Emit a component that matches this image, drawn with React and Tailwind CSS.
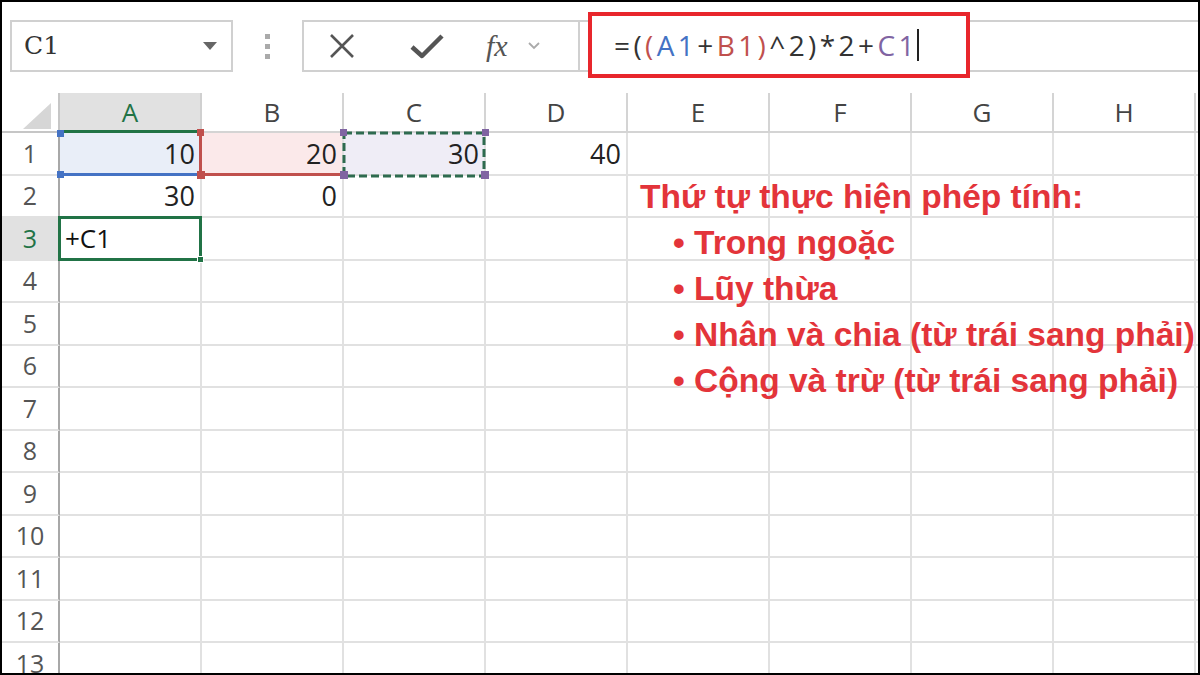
import React from "react";

const COLS = ["A", "B", "C", "D", "E", "F", "G", "H"];
const ROWS = [1, 2, 3, 4, 5, 6, 7, 8, 9, 10, 11, 12, 13];

const VALUES = {
  "A1": "10",
  "B1": "20",
  "C1": "30",
  "D1": "40",
  "A2": "30",
  "B2": "0",
};

function Sq({ cls }) {
  return <span className={"absolute w-[7px] h-[7px] z-20 " + cls} />;
}

function Cell({ col, row }) {
  const key = col + row;
  const v = VALUES[key];
  let bg = "bg-white";
  let overlay = null;
  if (key === "A1") {
    bg = "bg-[#e9eef8]";
    overlay = (
      <>
        <span className="absolute left-[-2px] right-[-2px] bottom-[-2px] h-[3px] bg-[#4472c4] z-10" />
        <Sq cls="bg-[#4472c4] left-[-3px] top-[-3px] w-[5px] h-[5px]" />
        <Sq cls="bg-[#4472c4] left-[-3px] bottom-[-4px] w-[5px] h-[6px]" />
      </>
    );
  } else if (key === "B1") {
    bg = "bg-[#fbe9ea]";
    overlay = (
      <>
        <span className="absolute left-[-3px] top-[-2px] bottom-[-2px] w-[3px] bg-[#c0504d] z-10" />
        <span className="absolute left-[-2px] right-[-2px] bottom-[-2px] h-[3px] bg-[#c0504d] z-10" />
        <Sq cls="bg-[#c0504d] left-[-5px] top-[-4px] w-[7px] h-[6px]" />
        <Sq cls="bg-[#c0504d] left-[-5px] bottom-[-5px] w-[8px] h-[8px]" />
      </>
    );
  } else if (key === "C1") {
    bg = "bg-[#efedf6]";
    overlay = (
      <>
        <svg className="absolute left-[-2px] top-[-2px] z-10" width="144" height="47" viewBox="0 0 144 47">
          <rect x="2" y="2" width="140" height="43" fill="none" stroke="#2e6b4f" strokeWidth="3" strokeDasharray="8 4" />
        </svg>
        <Sq cls="bg-[#8064a2] left-[-4px] top-[-4px]" />
        <Sq cls="bg-[#8064a2] left-[-4px] bottom-[-5px] w-[8px] h-[8px]" />
        <Sq cls="bg-[#8064a2] right-[-5px] top-[-4px]" />
        <Sq cls="bg-[#8064a2] right-[-5px] bottom-[-5px] w-[8px] h-[8px]" />
      </>
    );
  } else if (key === "A3") {
    overlay = (
      <>
        <span className="absolute left-[-2px] top-[-2px] right-[-2px] bottom-[-2px] border-[3px] border-[#217346] z-10" />
        <Sq cls="bg-[#217346] right-[-4px] bottom-[-4px] w-[6px] h-[6px] border border-white" />
      </>
    );
  }
  return (
    <div className={"relative h-[42.5px] border-r-2 border-b-2 border-[#e1e1e1] flex items-center " + bg}>
      {overlay}
      {v && (
        <span className="w-full text-right pr-[5px] text-[27px] text-[#222] leading-none">{v}</span>
      )}
      {key === "A3" && (
        <span className="pl-[5px] text-[26px] text-[#111] leading-none">+C1</span>
      )}
    </div>
  );
}

export default function App() {
  return (
    <div
      className="w-[1200px] h-[675px] border-2 border-black bg-white overflow-hidden relative"
      style={{ fontFamily: '"Open Sans", "Noto Sans", sans-serif' }}
    >
      {/* Toolbar */}
      <div className="h-[91px] flex items-start pt-[18px] pl-[8px]">
        <div className="w-[223px] h-[52px] border-2 border-[#d0d0d0] flex items-center justify-between pl-[12px] pr-[14px]">
          <span className="text-[25px] text-[#333]" style={{ fontFamily: '"DejaVu Serif", "Liberation Serif", serif' }}>C1</span>
          <svg width="14" height="8" viewBox="0 0 14 8"><path d="M0 0 L14 0 L7 8 Z" fill="#666" /></svg>
        </div>
        <div className="w-[69px] h-[52px] flex flex-col items-center justify-center gap-[5px]">
          <span className="w-[5px] h-[5px] bg-[#aaa]" />
          <span className="w-[5px] h-[5px] bg-[#aaa]" />
          <span className="w-[5px] h-[5px] bg-[#aaa]" />
        </div>
        <div className="w-[278px] h-[52px] border-2 border-[#d0d0d0] flex items-center">
          <svg className="ml-[25px]" width="26" height="26" viewBox="0 0 26 26">
            <path d="M2 2 L24 24 M24 2 L2 24" stroke="#555" strokeWidth="2.6" fill="none" />
          </svg>
          <svg className="ml-[55px]" width="34" height="26" viewBox="0 0 34 26">
            <path d="M2 14 L12 23 L32 3" stroke="#555" strokeWidth="4.5" fill="none" strokeLinejoin="round" />
          </svg>
          <span
            className="ml-[42px] text-[30px] italic text-[#555] leading-none"
            style={{ fontFamily: '"Liberation Serif", "DejaVu Serif", serif' }}
          >
            fx
          </span>
          <svg className="ml-[20px]" width="12" height="8" viewBox="0 0 12 8">
            <path d="M1 1 L6 6 L11 1" stroke="#aaa" strokeWidth="1.8" fill="none" />
          </svg>
        </div>
        <div className="flex-1 h-[52px] border-y-2 border-[#d0d0d0]" />
      </div>

      {/* Red formula box overlay */}
      <div className="absolute left-[586px] top-[10px] w-[382px] h-[66px] border-[4px] border-[#e8262c] bg-white flex items-center pl-[22px]">
        <span className="text-[28px] tracking-[3.4px] text-[#333] leading-none">
          =(<span className="text-[#c0504d]">(</span>
          <span className="text-[#4472c4]">A1</span>+<span className="text-[#c0504d]">B1)</span>^2)*2+
          <span className="text-[#8064a2]">C1</span>
        </span>
        <span className="w-[2px] h-[32px] bg-[#222] ml-[-1px]" />
      </div>

      {/* Grid */}
      <div className="grid grid-cols-[58px_repeat(8,142px)_1fr]">
        {/* header row */}
        <div className="relative h-[40px] border-r-2 border-b-2 border-[#c6c6c6] bg-white">
          <svg className="absolute left-[21px] top-[10px]" width="28" height="26" viewBox="0 0 28 26">
            <path d="M28 0 L28 26 L0 26 Z" fill="#d6d6d6" />
          </svg>
        </div>
        {COLS.map((c) => (
          <div
            key={c}
            className={
              "h-[40px] flex items-center justify-center text-[26px] leading-none border-r-2 " +
              (c === "A"
                ? "bg-[#e1e1e1] text-[#217346] border-b-[3px] border-b-[#217346] border-r-[#d0d0d0]"
                : "bg-white text-[#444] border-b-2 border-[#d4d4d4]")
            }
          >
            {c}
          </div>
        ))}
        <div className="h-[40px] border-b-2 border-[#d4d4d4]" />

        {ROWS.map((r) => (
          <React.Fragment key={r}>
            <div
              className={
                "h-[42.5px] flex items-center justify-center text-[25px] leading-none border-r-2 border-r-[#a8a8a8] border-b-2 border-b-[#e1e1e1] " +
                (r === 3 ? "bg-[#e1e1e1] text-[#217346]" : "bg-white text-[#555]")
              }
            >
              {r}
            </div>
            {COLS.map((c) => (
              <Cell key={c + r} col={c} row={r} />
            ))}
            <div className="h-[42.5px] border-b-2 border-[#e1e1e1]" />
          </React.Fragment>
        ))}
      </div>

      {/* Annotation */}
      <div
        className="absolute left-[638px] top-[172px] text-[#e3343a] font-bold text-[33.5px] leading-[46px]"
        style={{ fontFamily: '"Liberation Sans", Arial, sans-serif' }}
      >
        <div>Thứ tự thực hiện phép tính:</div>
        <div className="pl-[33px]">• Trong ngoặc</div>
        <div className="pl-[33px]">• Lũy thừa</div>
        <div className="pl-[33px]">• Nhân và chia (từ trái sang phải)</div>
        <div className="pl-[33px]">• Cộng và trừ (từ trái sang phải)</div>
      </div>
    </div>
  );
}
